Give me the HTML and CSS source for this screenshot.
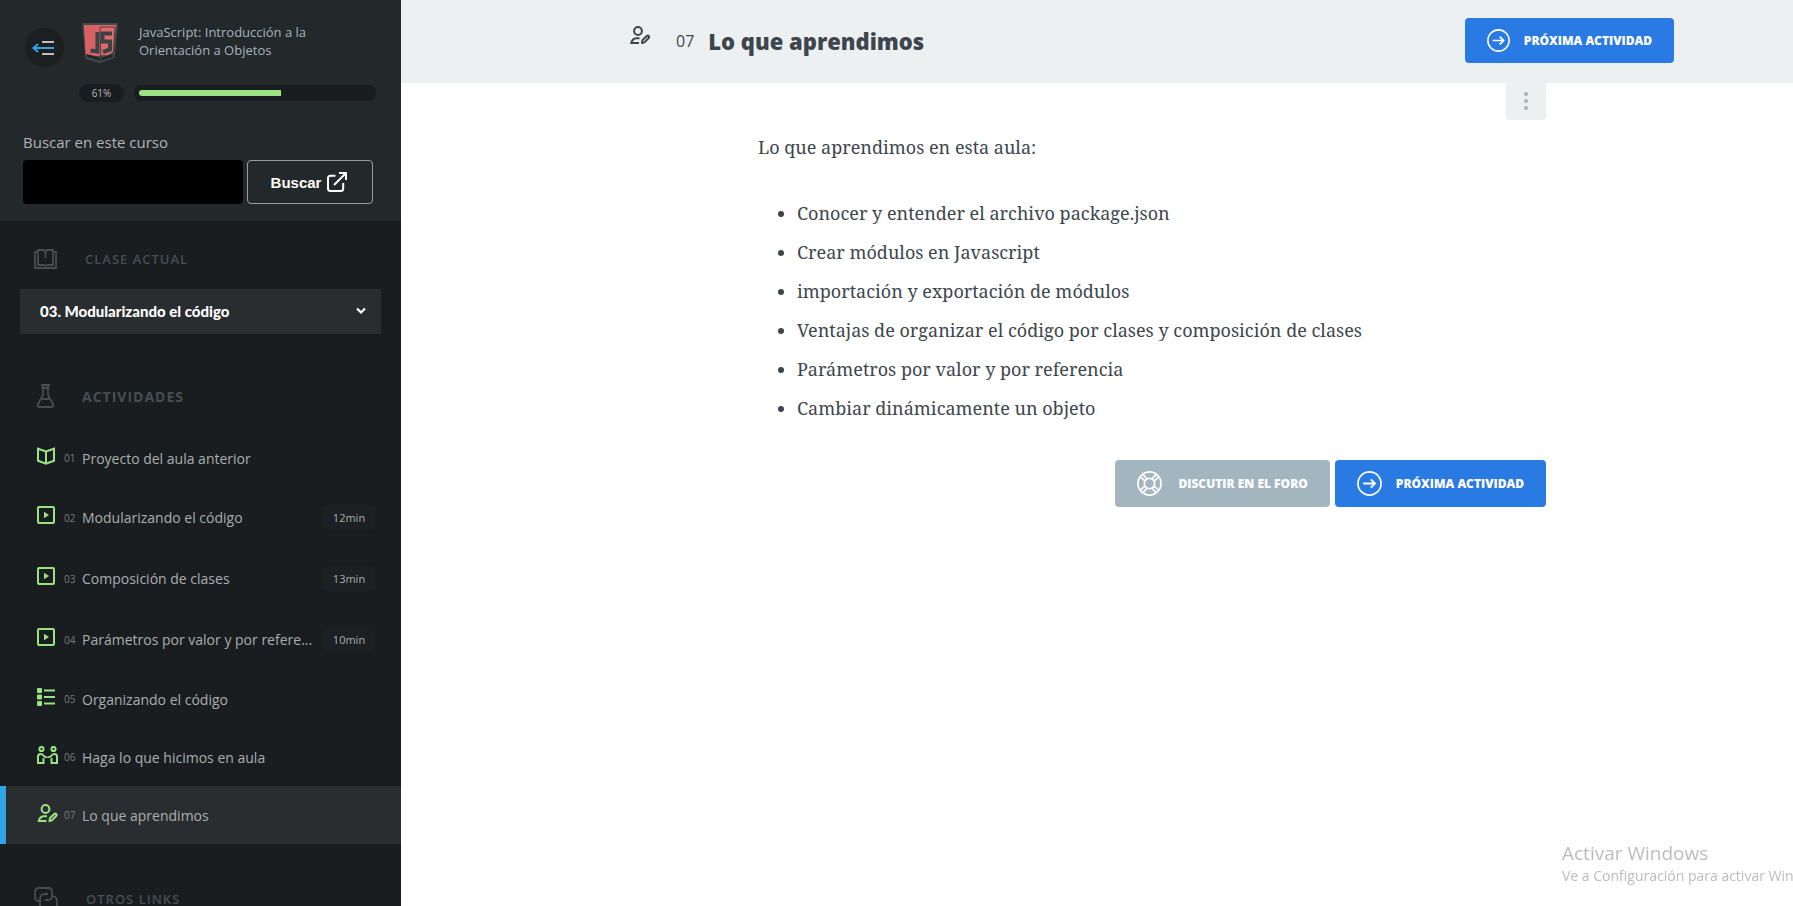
FILE: index.html
```html
<!DOCTYPE html>
<html lang="es">
<head>
<meta charset="utf-8">
<meta name="viewport" content="width=device-width, initial-scale=1">
<title>Lo que aprendimos</title>
<link rel="stylesheet" href="styles.css">
</head>
<body>
<svg class="defs" aria-hidden="true">
  <symbol id="i-play" viewBox="0 0 18 18"><rect x="1" y="1" width="16" height="16" rx="1" fill="none" stroke="currentColor" stroke-width="2"/><path d="M7 5.800v6.400L12 9z" fill="currentColor"/></symbol>
  <symbol id="i-user" viewBox="0 0 20 18"><g fill="none" stroke="currentColor" stroke-width="2"><circle cx="8" cy="5" r="3.900"/><path d="M9.500 12.200H6.200Q2.300 12.500 1.300 17H9"/><path d="M12 17l.4-2.800 4.400-4.200q1.200-.8 2 .1.800 1-.1 1.900l-4.300 4.400z" stroke-linejoin="round"/></g></symbol>
  <symbol id="i-next" viewBox="0 0 24 24"><g fill="none" stroke="currentColor" stroke-width="1.600"><circle cx="12" cy="12" r="11.100"/><path d="M6 12h11M13.300 8l4 4-4 4" stroke-width="1.800"/></g></symbol>
</svg>
<div class="layout">
  <aside class="sidebar">
    <div class="course">
      <div class="course-top">
        <button class="toggle" type="button" aria-label="Ocultar menú">
          <svg viewBox="0 0 22 16" width="22" height="16" fill="none" stroke-width="2"><path d="M10 2h12M10 14h12" stroke="#b9bfc2"/><path d="M1 8h21M6 4L1.500 8 6 12" stroke="#2fa4dc"/></svg>
        </button>
        <svg class="logo" viewBox="0 0 36 40" width="36" height="40"><path d="M0 0h36l-3.500 35L18 40 3.500 36z" fill="#44494b"/><path d="M2 2h32l-3 27-5 3-22 1z" fill="#e4686b"/><path d="M2 2h15v31H4z" fill="#d96165"/><path d="M4 31l9 2 5 2 13-4v3l-13 4-13-4z" fill="#23282b"/><path d="M15.500 9v19.500l-7-1M30 10.500h-9.500v8H28v8l-7 2.500" fill="none" stroke="#3c4143" stroke-width="4"/><path d="M18 4h15l-2 31-12 3z" fill="none" stroke="#3c4143"/></svg>
        <p class="course-name">JavaScript: Introducción a la Orientación a Objetos</p>
      </div>
      <div class="progress">
        <span class="percent">61%</span>
        <div class="track"><div class="fill" style="width:61%"></div></div>
      </div>
      <form class="search">
        <label for="q">Buscar en este curso</label>
        <div class="search-row">
          <input id="q" type="text">
          <button type="button">Buscar
            <svg viewBox="0 0 20 20" width="20" height="20" fill="none" stroke="currentColor" stroke-width="2"><path d="M8.500 3.800H3.500Q1 3.800 1 6.300v10.200Q1 19 3.500 19h10.200q2.500 0 2.500-2.500V11M7 13L18.500 1.500M12 1h7v7"/></svg>
          </button>
        </div>
      </form>
    </div>

    <section class="current">
      <h2 class="side-title"><svg viewBox="0 0 23 20" width="23" height="20" fill="none" stroke="currentColor" stroke-width="1.800"><path d="M3 2.800H1V19h21V2.800h-2"/><path d="M11.500 3L10 1H4v15h5.500l2 .8 2-.8H19V1h-6l-1.500 2v6"/></svg><label for="clase">Clase actual</label></h2>
      <div class="select-wrap">
        <select id="clase"><option>03. Modularizando el código</option></select>
        <svg viewBox="0 0 10 8" width="10" height="8" fill="none" stroke="#fff" stroke-width="2.200"><path d="M1 1.500l4 4 4-4"/></svg>
      </div>
    </section>

    <section>
      <h2 class="side-title side-title-lg"><svg viewBox="0 0 17 24" width="17" height="24" fill="none" stroke="currentColor" stroke-width="1.800"><path d="M4 1h9M4.500 4h8M6 1v10L1 20q-.8 3 1.500 3h12q2.300 0 1.500-3l-5-9V1M5 15h7"/></svg>Actividades</h2>
      <nav class="activities">
        <a href="#"><svg class="icon" viewBox="0 0 18 18" fill="none" stroke="currentColor" stroke-width="2"><path d="M1 1.700L9 4.500l8-2.800v12L9 16.800l-8-3.100zM9 4.500v12"/></svg><span class="num">01</span><span class="name">Proyecto del aula anterior</span></a>
        <a href="#" class="timed"><svg class="icon"><use href="#i-play"/></svg><span class="num">02</span><span class="name">Modularizando el código</span><span class="time">12min</span></a>
        <a href="#" class="timed"><svg class="icon"><use href="#i-play"/></svg><span class="num">03</span><span class="name">Composición de clases</span><span class="time">13min</span></a>
        <a href="#" class="timed"><svg class="icon"><use href="#i-play"/></svg><span class="num">04</span><span class="name">Parámetros por valor y por refere...</span><span class="time">10min</span></a>
        <a href="#"><svg class="icon" viewBox="0 0 18 18" fill="currentColor"><rect width="5" height="5" rx="1"/><rect y="6.500" width="5" height="5" rx="1"/><rect y="13" width="5" height="5" rx="1"/><path d="M7 1.500h11v2H7zM7 8h11v2H7zM7 14.500h11v2H7z"/></svg><span class="num">05</span><span class="name">Organizando el código</span></a>
        <a href="#"><svg class="icon icon-wide" viewBox="0 0 21 18" fill="none" stroke="currentColor" stroke-width="2"><circle cx="4.500" cy="3" r="2.100"/><circle cx="16.500" cy="3" r="2.100"/><path d="M6.500 12v5H1v-6.500Q1 8 3.500 8t3.300 2l2.700 1.500" /><path d="M14.500 12v5H20v-6.500Q20 8 17.500 8t-3.300 2l-2.700 1.500"/><path d="M8.500 11.200h4" stroke-width="1.200"/></svg><span class="num">06</span><span class="name">Haga lo que hicimos en aula</span></a>
        <a href="#" class="active" aria-current="page"><svg class="icon icon-wide"><use href="#i-user"/></svg><span class="num">07</span><span class="name">Lo que aprendimos</span></a>
      </nav>
    </section>

    <section class="links">
      <h2 class="side-title"><svg viewBox="0 0 24 24" width="24" height="24" fill="none" stroke="currentColor" stroke-width="1.800"><path d="M5 14H4q-3-1-3-4V5q0-4 4-4h9q4 0 4 4v4q0 4-4 4h-3"/><path d="M19 9q4 1 4 5v5q0 4-4 4h-9q-4 0-4-4v-7q0-4 4-5h4"/></svg>Otros links</h2>
    </section>
  </aside>

  <main class="main">
    <header class="head">
      <div class="head-inner">
        <svg class="head-icon"><use href="#i-user"/></svg>
        <span class="head-num">07</span>
        <h1>Lo que aprendimos</h1>
        <button class="btn btn-sm" type="button"><svg><use href="#i-next"/></svg>Próxima actividad</button>
      </div>
    </header>
    <div class="content">
      <button class="more" type="button" aria-label="Más opciones"><svg viewBox="0 0 4 18" width="4" height="18" fill="#a3b4bc"><circle cx="2" cy="2" r="2"/><circle cx="2" cy="9" r="2"/><circle cx="2" cy="16" r="2"/></svg></button>
      <article class="text">
        <p>Lo que aprendimos en esta aula:</p>
        <ul>
          <li>Conocer y entender el archivo package.json</li>
          <li>Crear módulos en Javascript</li>
          <li>importación y exportación de módulos</li>
          <li>Ventajas de organizar el código por clases y composición de clases</li>
          <li>Parámetros por valor y por referencia</li>
          <li>Cambiar dinámicamente un objeto</li>
        </ul>
      </article>
      <div class="actions">
        <button class="btn btn-forum" type="button"><svg viewBox="0 0 24 24" fill="none" stroke="currentColor" stroke-width="1.600"><circle cx="12" cy="12" r="11.100"/><circle cx="12" cy="12" r="5"/><path d="M7.500 9.500L3 5.500M9.500 7.500L5.500 3M16.500 9.500L21 5.500M14.500 7.500L18.500 3M7.500 14.500L3 18.500M9.500 16.500L5.500 21M16.500 14.500L21 18.500M14.500 16.500L18.500 21"/></svg>Discutir en el foro</button>
        <button class="btn" type="button"><svg><use href="#i-next"/></svg>Próxima actividad</button>
      </div>
    </div>
  </main>
</div>
<div class="watermark"><p class="wm-title">Activar Windows</p><p>Ve a Configuración para activar Windows.</p></div>
</body>
</html>
```
FILE: styles.css
```css
* { box-sizing: border-box; }
body, h1, h2, p, ul { margin: 0; padding: 0; }
body {
  font-family: "Open Sans", sans-serif;
  background: #fff;
  color: #3d464d;
  overflow: hidden;
}
button { font: inherit; border: 0; cursor: pointer; }
.defs { display: none; }
.layout { display: flex; height: 100vh; overflow: hidden; }

.sidebar {
  flex: 0 0 401px;
  background: #191d20;
  color: #a9adaf;
  overflow: hidden;
}
.course { background: #23282b; padding: 23px 25px 17px 23px; }
.course-top { display: flex; height: 61px; align-items: flex-start; }
.toggle {
  display: flex;
  align-items: center;
  justify-content: center;
  width: 39px;
  height: 39px;
  margin: 5px 18px 0 2px;
  padding: 0 4px 0 0;
  border-radius: 50%;
  background: #1b1f21;
}
.logo { flex: none; margin-right: 21px; }
.course-name { width: 200px; font-size: 13px; line-height: 18px; color: #a3b4bc; }
.progress { display: flex; align-items: center; gap: 10px; margin-left: 56px; }
.percent {
  width: 45px;
  border-radius: 9px;
  background: #191d20;
  color: #b4babd;
  font-size: 10px;
  line-height: 18px;
  text-align: center;
}
.track { flex: 1; padding: 5px; border-radius: 8px; background: #191d20; }
.fill { height: 6px; border-radius: 3px 0 0 3px; background: #9be382; }
.search { margin-top: 30px; }
.search label { display: block; font-size: 15px; line-height: 20px; color: #b1b4b6; }
.search-row { display: flex; gap: 4px; margin: 8px 3px 0 0; }
.search input {
  flex: 1;
  min-width: 0;
  height: 44px;
  border: 0;
  border-radius: 4px;
  padding: 0 12px;
  background: #000;
  color: #fff;
}
.search button {
  display: flex;
  align-items: center;
  justify-content: center;
  gap: 6px;
  width: 126px;
  padding: 0 8px 0 6px;
  border: 1px solid #9a9d9f;
  border-radius: 4px;
  background: transparent;
  color: #fff;
  font: bold 15px "Liberation Sans", Arial, sans-serif;
}

.side-title {
  display: flex;
  align-items: center;
  height: 24px;
  font-size: 13px;
  font-weight: 600;
  letter-spacing: 1px;
  text-transform: uppercase;
  color: #474d50;
  padding-left: 34px;
  gap: 28px;
}
.side-title-lg { font-size: 14px; font-weight: 700; padding-left: 37px; }
.current { padding: 26px 0 50px; }
.select-wrap { position: relative; margin: 18px 20px 0; }
.select-wrap select {
  appearance: none;
  width: 100%;
  height: 45px;
  padding: 0 20px 2px;
  border: 0;
  border-radius: 0;
  background: #292d30;
  color: #fff;
  font: 900 15px Lato, sans-serif;
}
.select-wrap svg { position: absolute; right: 15px; top: 18px; pointer-events: none; }
.activities { display: block; padding-top: 21px; }
.activities a {
  display: flex;
  align-items: center;
  height: 58px;
  padding: 0 26px 0 37px;
  color: inherit;
  font-size: 14px;
  text-decoration: none;
}
.activities .timed { height: 61px; }
.icon { flex: none; width: 18px; height: 18px; margin: 0 9px 5px 0; color: #9be382; }
.icon-wide { width: 21px; margin-right: 6px; }
.num { width: 18px; font-size: 10px; color: #777b7e; }
.name { flex: 1; min-width: 0; overflow: hidden; text-overflow: ellipsis; white-space: nowrap; }
.time {
  width: 52px;
  margin-left: 6px;
  border-radius: 4px;
  background: #1c2023;
  font-size: 11px;
  line-height: 25px;
  text-align: center;
}
.activities .active { background: #292d30; border-left: 6px solid #2fa4e7; padding-left: 31px; }
.links { padding-top: 43px; }

.main { flex: 1; min-width: 0; }
.head { background: #ecf0f1; padding-left: 110px; }
.head-inner {
  display: flex;
  align-items: center;
  max-width: 1044px;
  height: 83px;
  margin: 0 auto;
  padding-bottom: 2px;
}
.head-icon { width: 20px; height: 18px; margin: 0 26px 12px 0; }
.head-num { margin-right: 14px; font-size: 16px; }
h1 { flex: 1; font-size: 22px; line-height: 32px; font-weight: 800; }
.btn {
  display: flex;
  align-items: center;
  gap: 14px;
  height: 47px;
  padding: 0 22px;
  border-radius: 4px;
  background: #2a7ae4;
  color: #fff;
  font-size: 12px;
  font-weight: 800;
  text-transform: uppercase;
  white-space: nowrap;
}
.btn svg { width: 25px; height: 25px; }
.btn-sm { height: 45px; }
.btn-sm svg { width: 23px; height: 23px; }
.btn-forum { background: #a3b6bf; gap: 16px; }
.content {
  box-sizing: content-box;
  max-width: 788px;
  margin: 0 auto;
  padding-left: 110px;
}
.more {
  display: flex;
  align-items: center;
  justify-content: center;
  width: 40px;
  height: 37px;
  margin-left: auto;
  padding: 0 0 2px;
  border-radius: 0 0 3px 3px;
  background: #ecf0f1;
}
.text {
  font-family: "Noto Serif", "Liberation Serif", serif;
  font-size: 18px;
  line-height: 39px;
  padding-top: 8px;
}
.text ul { margin-top: 27px; padding-left: 39px; }
.actions { display: flex; justify-content: flex-end; gap: 5px; margin-top: 32px; }

.watermark {
  position: fixed;
  left: calc(100% - 231px);
  bottom: 20px;
  width: 320px;
  color: #bcbcbc;
  font-size: 14px;
  line-height: 20px;
  white-space: nowrap;
  pointer-events: none;
}
.wm-title { font-size: 19px; line-height: 26px; }
```
